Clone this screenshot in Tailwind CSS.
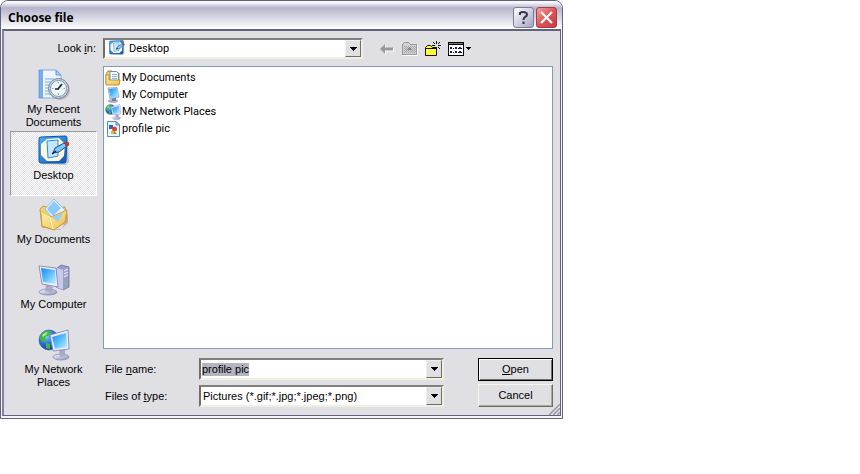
<!DOCTYPE html>
<html lang="en">
<head>
  <meta charset="UTF-8">
  <meta name="viewport" content="width=device-width, initial-scale=1.0">
  <title>Choose file</title>
  <script src="https://cdn.jsdelivr.net/npm/@tailwindcss/browser@4"></script>
</head>
<body class="bg-white font-['Liberation_Sans',sans-serif] text-[11px] leading-[13px] text-black">

  <!-- shared icons -->
  <svg class="absolute size-0" aria-hidden="true">
    <defs>
      <linearGradient id="screen" x1="0" y1="0" x2="1" y2="1">
        <stop offset="0" stop-color="#1f86ee"/><stop offset=".5" stop-color="#5cc0fb"/><stop offset="1" stop-color="#c5f1ff"/>
      </linearGradient>
      <linearGradient id="metal" x1="0" y1="0" x2="1" y2="1">
        <stop offset="0" stop-color="#f4f5fc"/><stop offset="1" stop-color="#8c90bc"/>
      </linearGradient>
      <linearGradient id="folder" x1="0" y1="0" x2="1" y2="1">
        <stop offset="0" stop-color="#fff3ae"/><stop offset="1" stop-color="#efbd4c"/>
      </linearGradient>
      <linearGradient id="blue" x1="0" y1="0" x2="1" y2="1">
        <stop offset="0" stop-color="#4cb4f5"/><stop offset="1" stop-color="#0b56b8"/>
      </linearGradient>
      <radialGradient id="globe" cx=".35" cy=".3" r=".8">
        <stop offset="0" stop-color="#8fd0ff"/><stop offset=".5" stop-color="#2472d8"/><stop offset="1" stop-color="#0c2f8c"/>
      </radialGradient>
    </defs>
    <symbol id="i-desktop" viewBox="0 0 32 32">
      <path d="M4 6 30 5 31 27 28 30 4 29Z" fill="#7d8498" opacity=".4"/>
      <path d="M1 4Q1 2 3 2L27 1Q29 1 29 3L28 26Q28 28 26 28L3 28Q1 28 1 26Z" fill="url(#blue)" stroke="#0c55a8"/>
      <path d="M9 4 21 3 27 9 26 21 21 26 9 26 3 20 3 9Z" fill="#fff8dc"/>
      <path d="M9 6 20 5 20 21 10 23Z" fill="#c4e6ff" stroke="#2e8ee0"/>
      <path d="M15 18 17 13 26 8 29 11 21 17Z" fill="#7cc6fa" stroke="#174f92"/>
      <path d="M14 19 18 16" stroke="#123" stroke-width="1.5"/>
      <rect x="27" y="7" width="4" height="4" rx="1" fill="#c43a1c"/>
    </symbol>
    <symbol id="i-computer" viewBox="0 0 32 32">
      <path d="M19 4 23 1 31 3V23L25 26 18 23Z" fill="#9a9dca" stroke="#6c6fa0" stroke-width=".8"/>
      <path d="M19 4 25 6V26L18 23Z" fill="#c9cbe6"/>
      <path d="M26 7 30 5M26 10 30 8M26 13 30 11" stroke="#e9eafa" stroke-width="1.2"/>
      <rect x="27" y="19" width="2" height="2" fill="#5de03c"/>
      <ellipse cx="10" cy="28" rx="9" ry="3" fill="url(#metal)" stroke="#8084a8" stroke-width=".7"/>
      <path d="M8 21 15 23 14 28 7 27Z" fill="#a8abc8"/>
      <path d="M1 2 18 4 20 23 4 20Z" fill="#eceefc" stroke="#777ba8" stroke-width=".8"/>
      <path d="M3 4 17 6 18 20 5 18Z" fill="url(#screen)"/>
    </symbol>
    <symbol id="i-network" viewBox="0 0 32 32">
      <circle cx="11" cy="11" r="10" fill="url(#globe)" stroke="#24539c" stroke-width=".6"/>
      <path d="M3 6Q7 1 13 2L11 6 7 8 8 12 5 13 2 10ZM8 14 12 15 12 20 8 19Z" fill="#42b93b"/>
      <path d="M4 6Q7 3 10 3L8 6 5 8Z" fill="#a7ee77"/>
      <ellipse cx="23" cy="28" rx="8" ry="3" fill="url(#metal)" stroke="#8084a8" stroke-width=".7"/>
      <path d="M21 21 27 20 27 27 22 28Z" fill="#a8abc8"/>
      <path d="M12 6 30 1 31 20 15 22Z" fill="#eceefc" stroke="#777ba8" stroke-width=".8"/>
      <path d="M14 8 28 4 29 18 17 20Z" fill="url(#screen)"/>
    </symbol>
  </svg>

  <main class="flex w-full max-w-[563px] flex-col rounded-t-lg border border-[#64617f] bg-[#f4f4fa] px-px pb-[2px]">

    <header class="-mx-px flex h-7 items-center gap-[2px] rounded-t-[7px] bg-linear-to-b from-[#f8f8fc] from-5% via-[#b5b5cc] via-25% to-white pr-[5px] pl-[7px] pt-1">
      <h1 class="flex-1 pt-px font-['Open_Sans','Noto_Sans',sans-serif] text-[12px] leading-5 font-bold">Choose file</h1>
      <button type="button" aria-label="Help" class="flex size-[21px] items-center justify-center rounded-[3px] border border-[#7b7b9c] bg-linear-to-br from-white via-[#d2d2e2] to-[#a3a3c1]">
        <svg class="size-[15px]" viewBox="0 0 15 15" fill="none" stroke="#34344e" stroke-width="2"><path d="M4 5V3Q5 2 7 2Q11 2 11 4.500Q11 6 9 7Q7.500 8 7.500 10M7.500 11.500V14"/></svg>
      </button>
      <button type="button" aria-label="Close" class="flex size-[21px] items-center justify-center rounded-[3px] border border-[#a23d4a] bg-linear-to-br from-[#f3a1a1] via-[#dc5555] to-[#c83c40]">
        <svg class="size-[15px]" viewBox="0 0 15 15" stroke="white" stroke-width="2.200"><path d="M2 2 13 13M13 2 2 13"/></svg>
      </button>
    </header>

    <form class="relative flex flex-col border-2 border-r border-b border-[#64617f] border-l-[#8582a0] bg-[#e0dfe4] pt-[7px] pr-[7px] pb-2 pl-[6px]" onsubmit="return false">

      <!-- look in -->
      <div class="flex h-[21px] items-center">
        <label for="look" class="w-[93px] pr-[7px] text-right">Look <u>i</u>n:</label>
        <div class="relative h-[21px] w-[260px]">
          <select id="look" class="h-full w-full appearance-none border-2 border-t-[#808080] border-r-[#f1efe2] border-b-[#f1efe2] border-l-[#716f64] bg-white pl-6 font-[Roboto,'Liberation_Sans',sans-serif] outline-none">
            <option>Desktop</option>
          </select>
          <svg class="pointer-events-none absolute top-0.5 left-[6px] size-4"><use href="#i-desktop"/></svg>
          <span class="pointer-events-none absolute top-0.5 right-0.5 flex h-[17px] w-4 items-center justify-center border border-t-[#f1efe2] border-r-[#716f64] border-b-[#716f64] border-l-[#f1efe2] bg-[#e0dfe4]">
            <svg class="h-1 w-[7px]" viewBox="0 0 7 4" shape-rendering="crispEdges"><path d="M0 0H7V1H6V2H5V3H4V4H3V3H2V2H1V1H0Z"/></svg>
          </span>
        </div>
        <div class="ml-4 flex items-center gap-[7px]">
          <button type="button" aria-label="Back" disabled>
            <svg class="size-4" viewBox="0 0 16 16"><path d="M2 9 7 4V7.500H15V10.500H7V14Z" fill="#fff"/><path d="M1 8 6 3V6.500H14V9.500H6V13Z" fill="#99989c"/></svg>
          </button>
          <button type="button" aria-label="Up one level" disabled>
            <svg class="size-4" viewBox="0 0 16 16" shape-rendering="crispEdges"><path d="M1 14.500H15.500V4" fill="none" stroke="#fff"/><path d="M.5 13.500V3.500L2.500 1.500H6.500L8.500 3.500H14.500V13.500Z" fill="#d2d1d6" stroke="#99989c"/><path d="M2 5.500H14M2 7.500H14M2 9.500H14M2 11.500H14" stroke="#a2a1a6" stroke-dasharray="1 1"/><path d="M3 6.500H14M3 8.500H14M3 10.500H14" stroke="#aaa9ae" stroke-dasharray="1 1"/><path d="M7 6H8V7H9V8H10V9H5V8H6V7H7Z" fill="#87868b"/></svg>
          </button>
          <button type="button" aria-label="Create new folder">
            <svg class="size-4" viewBox="0 0 16 16"><path d="M.5 14.500V6.500L2.500 4.500H5.500L7.500 6.500H11.500V14.500Z" fill="#fffb32" stroke="#111"/><path d="M1 7.500H11" stroke="#111"/><path d="M11.500 0V3M11.500 6V9M7 4.500H10M13 4.500H16M8 1 10 3M13 6 15 8M15 1 13 3" stroke="#111"/></svg>
          </button>
          <button type="button" aria-label="View menu" class="flex items-center gap-0.5">
            <svg class="h-4 w-4" viewBox="0 0 16 16" shape-rendering="crispEdges"><path d="M.5 1.500H15.500V14.500H.5Z" fill="#fff" stroke="#000"/><path d="M1 2H15V3H1Z" fill="#777"/><path d="M1 3H15V4H1Z"/><path d="M2 6H4V8H2ZM7 6H9V8H7ZM11 6H13V8H11ZM2 10H4V12H2ZM7 10H9V12H7ZM11 10H13V12H11Z" fill="#15157c"/><path d="M5 7.500H6M10 7.500H11M13 7.500H14M5 11.500H6M10 11.500H11M13 11.500H14" stroke="#000"/></svg>
            <svg class="h-[3px] w-[5px]" viewBox="0 0 5 3" shape-rendering="crispEdges"><path d="M0 0H5V1H4V2H3V3H2V2H1V1H0Z"/></svg>
          </button>
        </div>
      </div>

      <div class="mt-[7px] flex gap-[6px]">

        <!-- places bar -->
        <nav class="flex w-[87px] flex-col text-center">
          <button type="button" class="flex h-[65px] flex-col items-center gap-[2px] pt-[3px]">
            <svg class="size-8 shrink-0" viewBox="0 0 32 32">
              <path d="M1 1H18L23 6V29H1Z" fill="#eef6ff" stroke="#7fabe4"/>
              <path d="M1 1H5V29H1Z" fill="#4a8fe6" opacity=".7"/>
              <path d="M18 1V6H23Z" fill="#a4c9f3" stroke="#6d9ddc"/>
              <path d="M7 10H16M7 13H13M7 16H11M7 19H10M7 22H11M7 25H13" stroke="#78aaf0"/>
              <circle cx="22" cy="21" r="10" fill="#8f929e" opacity=".5"/>
              <circle cx="20.500" cy="19.500" r="10" fill="#ccd1dc" stroke="#7b8292"/>
              <circle cx="20.500" cy="19.500" r="8" fill="#eef9ff" stroke="#6d9cc9"/>
              <path d="M20 20 24 15M17 20H21" stroke="#182334" stroke-width="1.700"/>
              <path d="M20.500 13V14.500M20.500 24.500V26M14 19.500H15.500M25.500 19.500H27" stroke="#d08a43"/>
            </svg>
            <span>My Recent<br>Documents</span>
          </button>
          <button type="button" aria-pressed="true" class="flex h-[65px] flex-col items-center gap-[2px] border border-t-[#9b9a9f] border-r-white border-b-white border-l-[#9b9a9f] bg-[repeating-conic-gradient(#ffffff_0_25%,#e0dfe4_0_50%)] bg-size-[2px_2px] pt-[3px]">
            <svg class="size-8 shrink-0"><use href="#i-desktop"/></svg>
            <span>Desktop</span>
          </button>
          <button type="button" class="flex h-[65px] flex-col items-center gap-[2px] pt-[3px]">
            <svg class="size-8 shrink-0" viewBox="0 0 32 32">
              <path d="M5 30 22 31 30 24V13L24 30Z" fill="#6f7080" opacity=".35"/>
              <path d="M2 10 5 7 9 8 11 10 27 8 29 22 17 30 4 28Z" fill="#f4cf68" stroke="#c79d3c"/>
              <path d="M7 10 16 0 28 12 19 25Z" fill="#e2f3ff" stroke="#8cc2ee"/>
              <path d="M9 10 16 2 23 9 15 17Z" fill="#8cc8fb"/>
              <path d="M3 14 13 18 29 11 27 23 16 31 4 27Z" fill="url(#folder)" stroke="#cd9b35"/>
              <path d="M14 18 25 14 20 23Z" fill="#93cffa"/>
              <path d="M3 14 12 18 15 30" fill="none" stroke="#fff9ca"/>
            </svg>
            <span class="whitespace-nowrap">My Documents</span>
          </button>
          <button type="button" class="flex h-[65px] flex-col items-center gap-[2px] pt-[3px]">
            <svg class="size-8 shrink-0"><use href="#i-computer"/></svg>
            <span class="whitespace-nowrap">My Computer</span>
          </button>
          <button type="button" class="flex h-[65px] flex-col items-center gap-[2px] pt-[3px]">
            <svg class="size-8 shrink-0"><use href="#i-network"/></svg>
            <span>My Network<br>Places</span>
          </button>
        </nav>

        <div class="flex flex-1 flex-col">
          <ul class="h-[283px] border border-[#7f9db9] bg-white pt-[2px] pl-px font-[Roboto,'Liberation_Sans',sans-serif] leading-[17px]">
            <li class="flex h-[17px] items-center gap-px">
              <svg class="size-4" viewBox="0 0 16 16"><path d="M1 4 3 1H7L8 3H14V14H1Z" fill="#f5d264" stroke="#b68b28"/><path d="M5 1.500H11.500L13.500 3.500V11H5Z" fill="#f5faff" stroke="#618fbf"/><path d="M7 4.500H12M7 6.500H12M7 8.500H12" stroke="#8ab5e1"/><path d="M1 5H4V10H15L14 15H1Z" fill="url(#folder)" stroke="#bf9337"/></svg>
              <span>My Documents</span>
            </li>
            <li class="flex h-[17px] items-center gap-px">
              <svg class="size-4" viewBox="0 0 16 16"><ellipse cx="8" cy="14" rx="5" ry="1.800" fill="#a6a9c1"/><path d="M7 10H11V14H7Z" fill="#777da7"/><path d="M3 1 12 .5 14 10 5 12Z" fill="#e6edfc" stroke="#7c8fba" stroke-width=".7"/><path d="M4 2 11.500 1 13 9.500 5.500 11Z" fill="url(#screen)"/></svg>
              <span>My Computer</span>
            </li>
            <li class="flex h-[17px] items-center gap-px">
              <svg class="size-4"><use href="#i-network"/></svg>
              <span>My Network Places</span>
            </li>
            <li class="flex h-[17px] items-center gap-px">
              <svg class="size-4" viewBox="0 0 16 16"><path d="M2.500.5H11L14.500 4V15.500H2.500Z" fill="#eaf5ff" stroke="#558bc2"/><path d="M11 .5V4H14.500Z" fill="#a5c9ec" stroke="#558bc2"/><rect x="4" y="4" width="4" height="4" fill="#2463d2"/><circle cx="9.500" cy="8" r="2.500" fill="#e34425"/><path d="M6 10H9V13H6Z" fill="#f0b52a"/><path d="M9 10 12 13H9Z" fill="#46a847"/></svg>
              <span>profile pic</span>
            </li>
          </ul>

          <!-- file name and type -->
          <div class="mt-[9px] flex gap-[34px]">
            <div class="flex flex-1 flex-col gap-[5px]">
              <div class="flex items-center">
                <label for="name" class="w-24 pl-0.5">File <u>n</u>ame:</label>
                <div class="flex h-[22px] flex-1 border-2 border-t-[#808080] border-r-[#f1efe2] border-b-[#f1efe2] border-l-[#716f64] bg-white">
                  <input id="name" type="text" value="profile pic" class="w-0 flex-1 pl-px outline-none selection:bg-[#b2b4bf] selection:text-black">
                  <button type="button" aria-label="Show file names" class="flex w-4 items-center justify-center border border-t-[#f1efe2] border-r-[#716f64] border-b-[#716f64] border-l-[#f1efe2] bg-[#e0dfe4]">
                    <svg class="h-1 w-[7px]" viewBox="0 0 7 4" shape-rendering="crispEdges"><path d="M0 0H7V1H6V2H5V3H4V4H3V3H2V2H1V1H0Z"/></svg>
                  </button>
                </div>
              </div>
              <div class="flex items-center">
                <label for="type" class="w-24 pl-0.5">Files of <u>t</u>ype:</label>
                <div class="relative h-[22px] flex-1">
                  <select id="type" class="h-full w-full appearance-none border-2 border-t-[#808080] border-r-[#f1efe2] border-b-[#f1efe2] border-l-[#716f64] bg-white pl-0.5 outline-none">
                    <option>Pictures (*.gif;*.jpg;*.jpeg;*.png)</option>
                  </select>
                  <span class="pointer-events-none absolute top-0.5 right-0.5 flex h-[18px] w-4 items-center justify-center border border-t-[#f1efe2] border-r-[#716f64] border-b-[#716f64] border-l-[#f1efe2] bg-[#e0dfe4]">
                    <svg class="h-1 w-[7px]" viewBox="0 0 7 4" shape-rendering="crispEdges"><path d="M0 0H7V1H6V2H5V3H4V4H3V3H2V2H1V1H0Z"/></svg>
                  </span>
                </div>
              </div>
            </div>
            <div class="flex w-[75px] flex-col gap-[3px]">
              <button type="submit" class="h-[23px] border border-black bg-[#e0dfe4] shadow-[inset_1px_1px_#fff,inset_-1px_-1px_#716f64]"><u>O</u>pen</button>
              <button type="button" class="h-[23px] border border-t-[#f8f7ee] border-r-[#716f64] border-b-[#716f64] border-l-[#f8f7ee] bg-[#e0dfe4] shadow-[inset_-1px_-1px_#aaa89f]">Cancel</button>
            </div>
          </div>
        </div>
      </div>

      <!-- resize grip -->
      <svg class="absolute right-0 bottom-0 size-3" viewBox="0 0 12 12"><path d="M0 12 12 0M4 12 12 4M8 12 12 8" stroke="#fff"/><path d="M1 12 12 1M5 12 12 5M9 12 12 9" stroke="#96949b" stroke-width="1.500"/></svg>
    </form>
  </main>

  <script>
    const fileName = document.getElementById("name");
    fileName.focus();
    fileName.select();
  </script>
</body>
</html>
